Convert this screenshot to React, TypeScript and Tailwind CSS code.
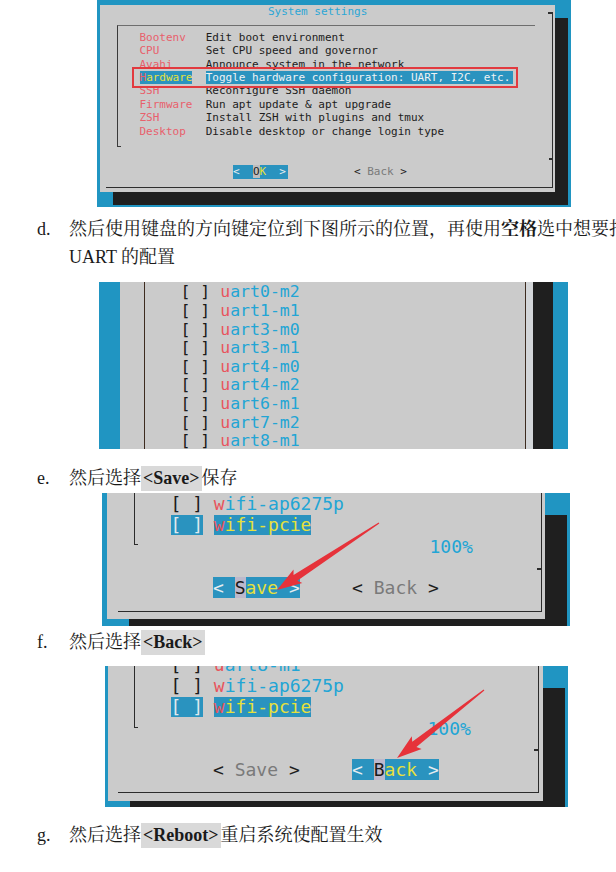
import React from "react";

const mono = "font-['DejaVu_Sans_Mono',monospace]";
const serif = "font-['Liberation_Serif','Noto_Serif_CJK_SC','Noto_Sans_CJK_SC',serif]";

function Para({ label, children }: { label?: string; children: React.ReactNode }) {
  return (
    <div className={`flex h-[28px] items-center whitespace-nowrap text-[18px] text-[#1a1a1a] ${serif}`}>
      <span className="ml-[37px] w-[32px] shrink-0">{label}</span>
      <span className="flex items-center">{children}</span>
    </div>
  );
}

function Tag({ children }: { children: React.ReactNode }) {
  return <span className="flex h-[25px] items-center bg-[#d9d9d9] px-[2px] font-bold">{children}</span>;
}

function Arrow({ x, y, len, angle }: { x: number; y: number; len: number; angle: number }) {
  const L = len;
  const pts = `0,-0.6 ${L - 22},-3.4 ${L - 25},-8 ${L},0 ${L - 25},8 ${L - 22},3.4 0,0.6`;
  return (
    <svg className="absolute left-0 top-0 h-full w-full">
      <polygon points={pts} fill="#e6323a" transform={`translate(${x} ${y}) rotate(${angle})`} />
    </svg>
  );
}

const menu: [string, string][] = [
  ["Bootenv", "Edit boot environment"],
  ["CPU", "Set CPU speed and governor"],
  ["Avahi", "Announce system in the network"],
  ["Hardware", "Toggle hardware configuration: UART, I2C, etc."],
  ["SSH", "Reconfigure SSH daemon"],
  ["Firmware", "Run apt update & apt upgrade"],
  ["ZSH", "Install ZSH with plugins and tmux"],
  ["Desktop", "Disable desktop or change login type"],
];

function Img1() {
  return (
    <div className="ml-[97px] h-[207px] w-[474px] overflow-hidden bg-[#2095c2] pl-[3px] pt-[5px]">
      <div className="h-[187px] w-[455px] bg-[#cbcbcb] pl-[6px] pt-[7px] shadow-[13px_13px_0_0_#1f1f1f]">
        <div
          className={`relative flex h-[175.5px] w-[446.5px] flex-col border-b-[1.5px] border-r-[1.5px] border-[#2e2e2e] text-[11px] leading-[13.4px] ${mono}`}
        >
          <div className="absolute right-0 top-0 h-[1.5px] w-[4px] bg-[#2e2e2e]" />
          <div className="absolute right-0 top-[146px] h-[1.5px] w-[3px] bg-[#2e2e2e]" />
          <div className="-mt-[6.7px] h-[13.4px] whitespace-pre pl-[162px] text-[#2aa6d6]">System settings</div>
          <div className="relative ml-[11px] mt-[6.3px] h-[122px] w-[418px] border-l-[1.5px] border-t-[1.5px] border-l-[#3a3a3a] border-t-[#6e6e6e] pl-[21.5px] pt-[4.8px]">
            {menu.map(([tag, desc]) => {
              const sel = tag === "Hardware";
              return (
                <div key={tag} className="flex h-[13.4px] whitespace-pre">
                  <span className="w-[66.2px] shrink-0">
                    {sel ? (
                      <span className="bg-[#2a93bf]">
                        <span className="text-[#e8606b]">H</span>
                        <span className="text-[#e6e03c]">ardware</span>
                      </span>
                    ) : (
                      <span className="text-[#e8606b]">{tag}</span>
                    )}
                  </span>
                  <span className={sel ? "bg-[#2a93bf] pr-[3px] text-[#eef2f4]" : "text-[#1c1c1c]"}>{desc}</span>
                </div>
              );
            })}
            <div className="absolute -left-[1.5px] bottom-0 h-[1.5px] w-[4px] bg-[#3a3a3a]" />
            <div className="absolute left-[13.5px] top-[40.5px] h-[21px] w-[386px] border-2 border-[#e23a3f]" />
          </div>
          <div className="ml-[127px] mt-[18.3px] flex h-[13.4px] whitespace-pre">
            <span className="bg-[#2a93bf] pr-[2px] text-[#e8eef0]">
              {"<  "}
              <span className="bg-[#bdbdbd] text-[#222]">O</span>
              <span className="text-[#e6e03c]">K</span>
              {"  >"}
            </span>
            <span className="ml-[66px] text-[#222]">
              {"< "}
              <span className="text-[#7a7a7a]">Back</span>
              {" >"}
            </span>
          </div>
        </div>
      </div>
    </div>
  );
}

const uarts = ["uart0-m2", "uart1-m1", "uart3-m0", "uart3-m1", "uart4-m0", "uart4-m2", "uart6-m1", "uart7-m2", "uart8-m1"];

function Img2() {
  return (
    <div className="ml-[99px] mt-[11px] h-[167px] w-[469px] overflow-hidden bg-[#2095c2] pl-[21px]">
      <div className="flex h-full w-[413px] bg-[#cbcbcb] shadow-[20px_0_0_0_#1f1f1f]">
        <div className="h-full w-[406px] border-r-[1.5px] border-[#3d2b1f]">
          <div
            className={`ml-[24px] h-full border-l-[1.5px] border-[#3d2b1f] pl-[35.5px] pt-[1.4px] text-[16.5px] leading-[18.6px] ${mono}`}
          >
            {uarts.map((u) => (
              <div key={u} className="h-[18.6px] whitespace-pre">
                <span className="text-[#1a1a1a]">{"[ ] "}</span>
                <span className="text-[#e8555d]">u</span>
                <span className="text-[#22a5d5]">{u.slice(1)}</span>
              </div>
            ))}
          </div>
        </div>
        <div className="flex-1 bg-[#d3d6d9]" />
      </div>
    </div>
  );
}

function Item({ name, sel }: { name: string; sel?: boolean }) {
  return (
    <div className="flex h-[21.5px] shrink-0 items-center whitespace-pre">
      {sel ? (
        <span className="h-[20px] bg-[#2a93bf] leading-[20px] text-[#dfe8ee]">[ ]</span>
      ) : (
        <span className="text-[#1a1a1a]">[ ]</span>
      )}
      <span> </span>
      <span className={sel ? "h-[20px] bg-[#2a93bf] leading-[20px]" : ""}>
        <span className="text-[#e8555d]">{name[0]}</span>
        <span className={sel ? "text-[#e6e03c]" : "text-[#22a5d5]"}>{name.slice(1)}</span>
      </span>
    </div>
  );
}

function Btn({ label, sel }: { label: string; sel?: boolean }) {
  if (sel) {
    return (
      <span className="flex h-[21px] items-center whitespace-pre bg-[#2a93bf] leading-[21px] text-[#e4ecf0]">
        {"< "}
        <span className="bg-[#bdb9cc] text-[#1a1a1a]">{label[0]}</span>
        <span className="text-[#e6e03c]">{label.slice(1)}</span>
        {" >"}
      </span>
    );
  }
  return (
    <span className="flex h-[21px] items-center whitespace-pre text-[#1e1e1e]">
      {"< "}
      <span className="text-[#7a7a7a]">{label}</span>
      {" >"}
    </span>
  );
}

function Img3() {
  return (
    <div className="relative ml-[102px] mt-[1px] h-[133px] w-[468px] overflow-hidden bg-[#2095c2] pl-[5px]">
      <div className="h-[126px] w-[438px] bg-[#cbcbcb] pl-[11px] shadow-[22px_22px_0_0_#1f1f1f]">
        <div
          className={`relative flex h-[118.5px] w-[423.5px] flex-col border-b-[1.5px] border-r-[1.5px] border-[#2b2b2b] text-[18px] ${mono}`}
        >
          <div className="absolute right-0 top-[75px] h-[1.5px] w-[4px] bg-[#2b2b2b]" />
          <div className="relative ml-[16px] flex h-[52px] shrink-0 flex-col border-l-[1.5px] border-[#2b2b2b] pl-[35.5px]">
            <div className="-mt-[0.75px] flex flex-col">
              <Item name="wifi-ap6275p" />
              <Item name="wifi-pcie" sel />
              <div className="flex h-[21.5px] items-center pl-[259px] text-[#22a5d5]">100%</div>
            </div>
            <div className="absolute -left-[1.5px] bottom-0 h-[1.5px] w-[4px] bg-[#2b2b2b]" />
          </div>
          <div className="ml-[95px] mt-[31.5px] flex h-[21.5px] items-center">
            <Btn label="Save" sel />
            <span className="ml-[52.3px]">
              <Btn label="Back" />
            </span>
          </div>
        </div>
      </div>
      <Arrow x={277} y={30} len={122} angle={146.7} />
    </div>
  );
}

function Img4() {
  return (
    <div className="relative ml-[105px] mt-[10px] h-[141px] w-[463px] overflow-hidden bg-[#2095c2] pl-[3px]">
      <div className="h-[135px] w-[435px] bg-[#cbcbcb] pl-[10px] shadow-[22px_22px_0_0_#1f1f1f]">
        <div
          className={`relative flex h-[126.5px] w-[420.5px] flex-col border-b-[1.5px] border-r-[1.5px] border-[#2b2b2b] text-[18px] ${mono}`}
        >
          <div className="absolute right-0 top-[83px] h-[1.5px] w-[4px] bg-[#2b2b2b]" />
          <div className="relative ml-[16px] flex h-[62px] shrink-0 flex-col border-l-[1.5px] border-[#2b2b2b] pl-[35.5px]">
            <div className="-mt-[12.5px] flex flex-col">
              <Item name="uart8-m1" />
              <Item name="wifi-ap6275p" />
              <Item name="wifi-pcie" sel />
              <div className="flex h-[21.5px] items-center pl-[257px] text-[#22a5d5]">100%</div>
            </div>
            <div className="absolute -left-[1.5px] bottom-0 h-[1.5px] w-[4px] bg-[#2b2b2b]" />
          </div>
          <div className="ml-[95px] mt-[30px] flex h-[22px] items-center">
            <Btn label="Save" />
            <span className="ml-[52.3px]">
              <Btn label="Back" sel />
            </span>
          </div>
        </div>
      </div>
      <Arrow x={379} y={24} len={110.4} angle={142} />
    </div>
  );
}

export default function App() {
  return (
    <div className="h-[872px] w-[616px] overflow-hidden bg-white">
      <Img1 />
      <div className="mt-[8px]">
        <Para label="d.">
          <span>然后使用键盘的方向键定位到下图所示的位置，再使用</span>
          <span className="font-bold">空格</span>
          <span>选中想要打开的</span>
        </Para>
        <Para>
          <span>UART 的配置</span>
        </Para>
      </div>
      <Img2 />
      <div className="mt-[15px]">
        <Para label="e.">
          <span>然后选择</span>
          <Tag>&lt;Save&gt;</Tag>
          <span>保存</span>
        </Para>
      </div>
      <Img3 />
      <div className="mt-[2px]">
        <Para label="f.">
          <span>然后选择</span>
          <Tag>&lt;Back&gt;</Tag>
        </Para>
      </div>
      <Img4 />
      <div className="mt-[14px]">
        <Para label="g.">
          <span>然后选择</span>
          <Tag>&lt;Reboot&gt;</Tag>
          <span>重启系统使配置生效</span>
        </Para>
      </div>
    </div>
  );
}
